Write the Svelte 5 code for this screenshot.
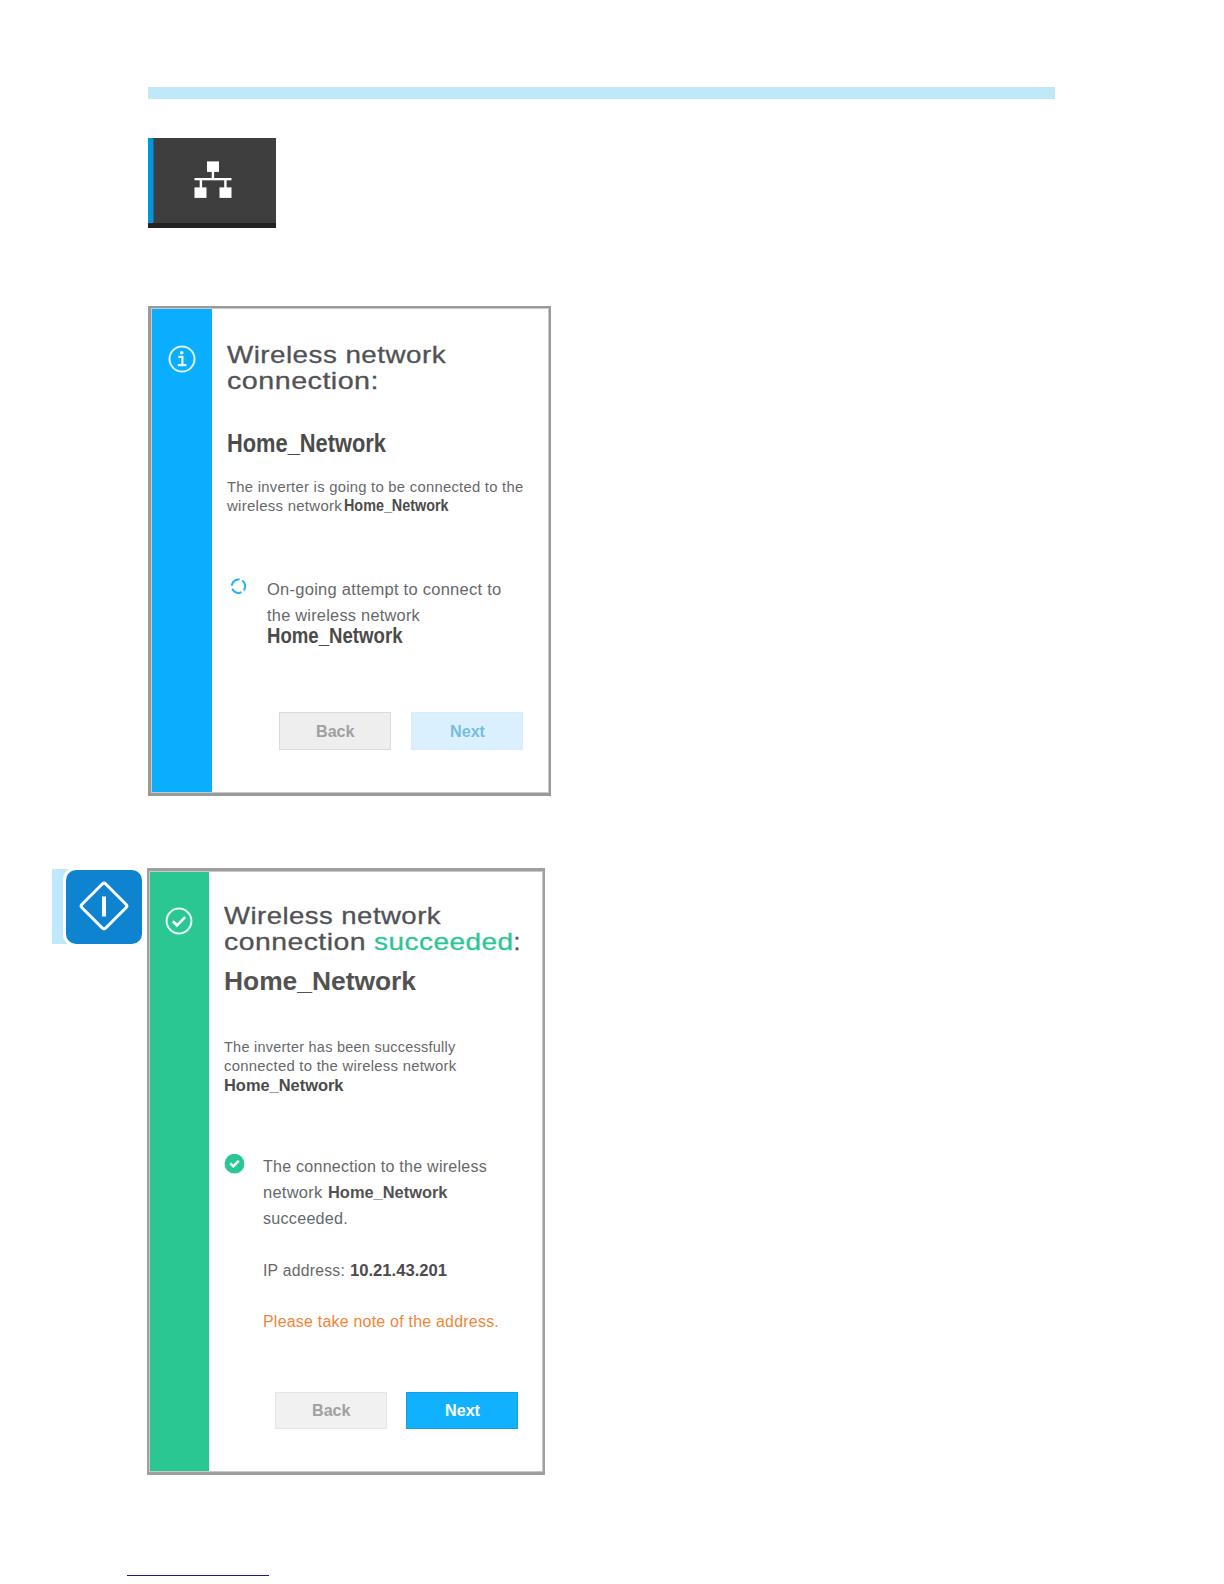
<script>
  const network = 'Home_Network';

  // Stretches a piece of text to the given width in px
  function fit(node, width) {
    const natural = node.getBoundingClientRect().width;
    node.style.transform = `scaleX(${width / natural})`;
    node.style.marginRight = `${width - natural}px`;
  }
</script>

<main class="page">
  <div class="top-bar"></div>

  <div class="menu-tile">
    <svg width="40" height="40" viewBox="0 0 40 40" fill="#fff">
      <rect x="14" y="2.4" width="12" height="10.5" />
      <rect x="18.7" y="12" width="2.4" height="8" />
      <rect x="1.5" y="19" width="37" height="2.3" />
      <rect x="6.7" y="20" width="2.4" height="9" />
      <rect x="31.2" y="20" width="2.4" height="9" />
      <rect x="1.5" y="28.4" width="12" height="10.5" />
      <rect x="26.5" y="28.4" width="12" height="10.5" />
    </svg>
  </div>

  <section class="panel connecting">
    <div class="side">
      <svg width="28" height="28" viewBox="0 0 28 28">
        <circle cx="14" cy="14" r="12.5" fill="none" stroke="#d9f3ff" stroke-width="2" />
        <circle cx="13.7" cy="7.8" r="1.8" fill="#e6f7ff" />
        <path d="M10.4 11.9h4v8M9.8 20.2h8.6" fill="none" stroke="#e6f7ff" stroke-width="2.2" />
      </svg>
    </div>
    <div class="content">
      <h2>
        <div class="row"><span use:fit={219}>Wireless network</span></div>
        <div class="row"><span use:fit={152}>connection:</span></div>
      </h2>
      <div class="row name"><b use:fit={159}>{network}</b></div>
      <div class="small">
        <div class="row"><span use:fit={296.5}>The inverter is going to be connected to the</span></div>
        <div class="row gap-2">
          <span use:fit={115}>wireless network</span>
          <b use:fit={104.5}>{network}</b>
        </div>
      </div>
      <div class="status">
        <svg width="24" height="20" viewBox="0 0 24 20">
          <circle cx="11.5" cy="9.2" r="6.7" transform="rotate(-58 11.5 9.2)" fill="none" stroke="#24b2f5" stroke-width="2" stroke-dasharray="11.2 2.83" />
        </svg>
        <div class="lines">
          <div class="row"><span use:fit={234.5}>On-going attempt to connect to</span></div>
          <div class="row"><span use:fit={153}>the wireless network</span></div>
          <div class="row big"><b use:fit={135.5}>{network}</b></div>
        </div>
      </div>
      <div class="buttons">
        <button class="back" type="button"><span use:fit={38.5}>Back</span></button>
        <button class="next disabled" type="button"><span use:fit={35}>Next</span></button>
      </div>
    </div>
  </section>

  <div class="result">
    <div class="marker">
      <div class="badge">
        <svg width="56" height="56" viewBox="0 0 56 56">
          <rect x="11.2" y="11.2" width="33.6" height="33.6" rx="2.5" transform="rotate(45 28 28)" fill="none" stroke="#fff" stroke-width="3" />
          <rect x="26" y="18.5" width="4" height="20" fill="#fff" />
        </svg>
      </div>
    </div>

    <section class="panel succeeded">
      <div class="side">
        <svg width="28" height="28" viewBox="0 0 28 28" fill="none">
          <circle cx="14" cy="14" r="12.4" stroke="#e2fff4" stroke-width="2" />
          <path d="M7.8 14.2l4.2 4.1 8.1-8.2" stroke="#fff" stroke-width="2.6" />
        </svg>
      </div>
      <div class="content">
        <h2>
          <div class="row"><span use:fit={217}>Wireless network</span></div>
          <div class="row">
            <span use:fit={142}>connection</span>
            <span class="green" use:fit={139.5}>succeeded</span><span class="colon">:</span>
          </div>
        </h2>
        <div class="row name"><b use:fit={192}>{network}</b></div>
        <div class="small">
          <div class="row"><span use:fit={231.5}>The inverter has been successfully</span></div>
          <div class="row"><span use:fit={232.5}>connected to the wireless network</span></div>
          <div class="row last"><b use:fit={119.5}>{network}</b></div>
        </div>
        <div class="status">
          <svg width="24" height="20" viewBox="0 0 24 20" fill="none">
            <circle cx="10.5" cy="9.7" r="9.9" fill="#2ac793" />
            <path d="M6.3 9.4l3 2.9 5.5-5.5" stroke="#fff" stroke-width="2.5" />
          </svg>
          <div class="lines">
            <div class="row"><span use:fit={224}>The connection to the wireless</span></div>
            <div class="row gap-5">
              <span use:fit={59.5}>network</span>
              <b class="inline-name" use:fit={119.5}>{network}</b>
            </div>
            <div class="row"><span use:fit={85}>succeeded.</span></div>
            <div class="row spaced gap-5">
              <span use:fit={82}>IP address:</span>
              <b use:fit={97}>10.21.43.201</b>
            </div>
            <div class="row spaced note"><span use:fit={236}>Please take note of the address.</span></div>
          </div>
        </div>
        <div class="buttons">
          <button class="back" type="button"><span use:fit={38.5}>Back</span></button>
          <button class="next" type="button"><span use:fit={35}>Next</span></button>
        </div>
      </div>
    </section>
  </div>

  <div class="footer-line"></div>
</main>

<style>
  :global(body) {
    margin: 0;
    background: #fff;
  }

  .page {
    box-sizing: border-box;
    width: 1224px;
    height: 1584px;
    padding-top: 87px;
    overflow: hidden;
    background: #fff;
    color: #505255;
    font-family: 'Liberation Sans', Arial, sans-serif;
  }

  .top-bar {
    width: 907px;
    height: 12px;
    margin-left: 148px;
    background: #bfe9f8;
  }

  .menu-tile {
    box-sizing: border-box;
    width: 128px;
    height: 90px;
    margin: 39px 0 0 148px;
    padding: 21px 0 0 45px;
    background:
      linear-gradient(to top, #222 5px, transparent 5px),
      linear-gradient(to right, #0096de 5px, #3e3e3e 6px);
  }

  .menu-tile svg {
    display: block;
  }

  .panel {
    box-sizing: border-box;
    display: flex;
    border-style: solid;
    border-color: #999b9b;
    background: #c3cbca;
    padding: 1px;
  }

  .connecting {
    width: 403px;
    height: 490px;
    margin: 78px 0 0 148px;
    border-width: 2px 2px 3px 3px;
  }

  .succeeded {
    width: 398px;
    height: 607px;
    border-width: 3px 2px 3px 2px;
    border-color: #9f9f9f;
  }

  .side {
    flex: none;
    display: flex;
    justify-content: center;
    align-items: flex-start;
    box-sizing: border-box;
  }

  .connecting .side {
    width: 60px;
    padding-top: 36px;
    background: #0badff;
  }

  .succeeded .side {
    width: 59px;
    padding: 35px 1px 0 0;
    background: #2ac793;
  }

  .content {
    flex: 1;
    min-width: 0;
    box-sizing: border-box;
    padding: 32.5px 0 0 14.5px;
    background: #fff;
  }

  .succeeded .content {
    padding: 31px 0 0 15px;
  }

  .row {
    display: flex;
    align-items: baseline;
    white-space: nowrap;
  }

  .row span,
  .row b,
  button span {
    display: inline-block;
    flex: none;
    transform-origin: left center;
  }

  .gap-2 {
    gap: 2px;
  }

  .gap-5 {
    gap: 5px;
  }

  h2 {
    margin: 0;
    font-size: 24.5px;
    font-weight: 400;
    line-height: 26px;
    letter-spacing: 0.4px;
    -webkit-text-stroke: 0.3px currentColor;
  }

  h2 .green {
    margin-left: 8px;
    color: #2ac793;
  }

  .name {
    margin-top: 34.5px;
    font-size: 26px;
    line-height: 30px;
    color: #4b4b4b;
  }

  .succeeded .name {
    margin-top: 11px;
    color: #525252;
  }

  .small {
    margin-top: 20px;
    font-size: 14px;
    line-height: 19px;
    color: #66686a;
  }

  .small span {
    letter-spacing: 0.25px;
  }

  .small .row {
    height: 19px;
  }

  .small b {
    font-size: 17px;
    line-height: 17px;
    color: #4b4b4b;
  }

  .small .last b {
    line-height: 19px;
  }

  .succeeded .small {
    margin-top: 42px;
  }

  .status {
    display: flex;
    gap: 16px;
    margin-top: 60.5px;
    font-size: 16px;
    line-height: 26px;
    color: #66686a;
  }

  .status span {
    letter-spacing: 0.25px;
  }

  .status svg {
    flex: none;
  }

  .status b {
    color: #4b4b4b;
  }

  .succeeded .status {
    gap: 15px;
    margin-top: 59px;
    line-height: 25.9px;
  }

  .status .big {
    margin-top: -2.5px;
    font-size: 22px;
    line-height: 20px;
  }

  .status .inline-name {
    font-size: 17px;
    line-height: 25px;
    color: #525252;
  }

  .spaced {
    margin-top: 25.9px;
  }

  .note {
    color: #ee8537;
  }

  .buttons {
    display: flex;
    gap: 20px;
    margin: 66px 0 0 52.5px;
  }

  .succeeded .buttons {
    gap: 19px;
    margin: 56.5px 0 0 51px;
  }

  button {
    box-sizing: border-box;
    width: 112px;
    height: 37px;
    padding: 1px 0 0;
    border: 1px solid #dadada;
    background: #eee;
    color: #a0a0a0;
    font: bold 16px/34px 'Liberation Sans', Arial, sans-serif;
  }

  .connecting button {
    height: 38px;
    line-height: 36px;
  }

  .succeeded .back {
    border-color: #e6e6e6;
    background: #f1f1f1;
  }

  .next {
    border-color: #1b9be0;
    background: #10b2ff;
    color: #fff;
  }

  .next.disabled {
    border-color: #d5edfc;
    background: #dbf0ff;
    color: #76bde0;
  }

  .result {
    display: flex;
    align-items: flex-start;
    gap: 5px;
    margin: 72px 0 0 52px;
  }

  .marker {
    box-sizing: border-box;
    width: 90px;
    height: 75px;
    margin-top: 1px;
    padding: 0.5px 0 0 14px;
    overflow: hidden;
    background: linear-gradient(to right, #bfe9fa 24px, #fff 24px);
  }

  .badge {
    display: flex;
    justify-content: center;
    align-items: center;
    height: 74px;
    border-radius: 10px;
    background: #0e84d0;
    box-shadow: 0 0 0 3px #fff;
  }

  .badge svg {
    margin-top: -1px;
  }

  .footer-line {
    width: 142px;
    height: 1px;
    margin: 100px 0 0 127px;
    background: #1b1b80;
  }
</style>
